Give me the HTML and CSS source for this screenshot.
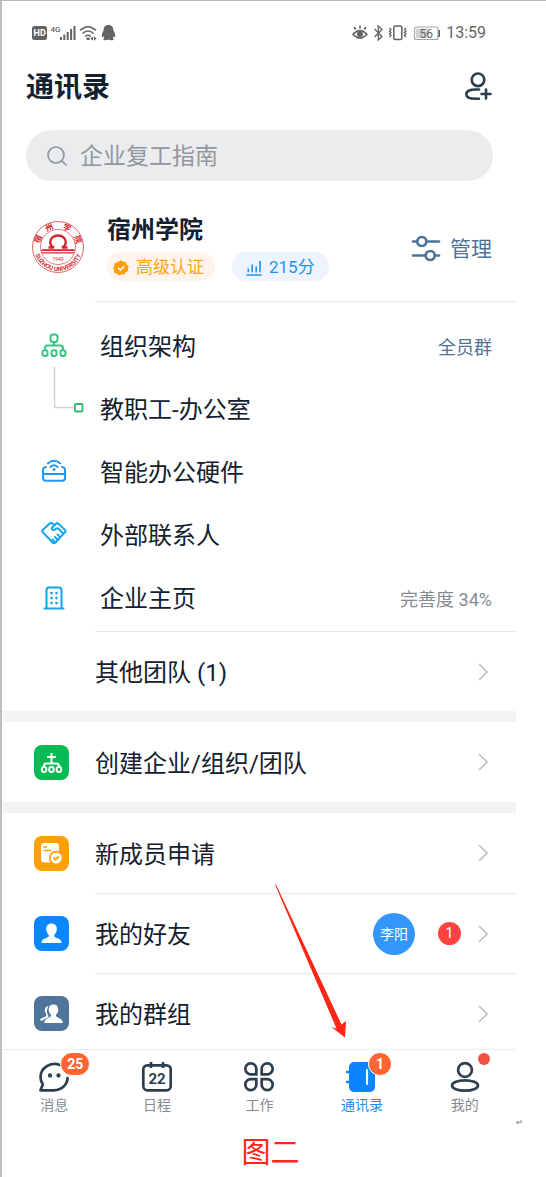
FILE: index.html
```html
<!DOCTYPE html>
<html lang="zh-CN">
<head>
<meta charset="utf-8">
<meta name="viewport" content="width=device-width, initial-scale=1">
<title>通讯录</title>
<link rel="stylesheet" href="styles.css">
</head>
<body>
<div class="sheet">
<div class="phone">
  <div class="status">
    <div class="status-group">
      <svg width="85" height="18" viewBox="0 0 85 18" fill="#636363">
        <rect x="0" y="2" width="15" height="14" rx="2.5"/>
        <text x="1.6" y="12.3" font-size="9" font-weight="700" fill="#fff">HD</text>
        <text x="18.500" y="8" font-size="8" font-weight="500">4G</text>
        <path d="M28 13h2v3h-2zM31.300 10.500h2V16h-2zM34.700 8h2v8h-2zM38.100 5h2v11h-2zM41.500 2h2v14h-2z"/>
        <path d="M48 6.500q8-7.500 16 0M50.500 9.500q5.500-5 11 0M53.200 12.500q2.800-2.500 5.600 0" fill="none" stroke="#636363" stroke-width="1.500"/>
        <path d="M54.500 13.500h3v2.500h-3zM58.500 14.500l2.500-2.300v4.500zM64.500 14.500l-2.500-2.300v4.500z"/>
        <path d="M76.500 1c-3.400 0-5 2.400-4.900 5.600-1.200 2-2.100 4.100-1.700 6.300.2.500.7.300 1.400-.7.200.8.600 1.500 1.100 2-1.700.7-1.200 2 .4 2 1.600.1 2.900-.2 3.700-.7.900.5 2.100.8 3.700.7 1.700 0 2.200-1.300.5-2 .5-.5.900-1.200 1.100-2 .7 1 1.200 1.200 1.400.7.300-2.200-.5-4.300-1.800-6.300C81.500 3.400 79.900 1 76.500 1z"/>
      </svg>
    </div>
    <div class="status-group">
      <svg width="88" height="18" viewBox="1 0 88 18" fill="none" stroke="#636363" stroke-width="1.500">
        <path d="M2 10.200q7-7.500 14 0-7 7.800-14 0zM9 4.500V1.500M5 5.500L3 3M13 5.500L15 3"/>
        <circle cx="9" cy="10" r="2.300" fill="#636363"/>
        <path d="M23.500 5l7.500 7.500-3.700 3.500V2L31 5.500 23.500 13" stroke-width="1.300"/>
        <rect x="42.800" y="2" width="8" height="13.500" rx="1.500"/>
        <path d="M38.500 4l1.500 1.500L38.500 7l1.500 1.500L38.500 10l1.500 1.500L38.500 13M55 4L53.500 5.500 55 7 53.500 8.500 55 10 53.500 11.500 55 13" stroke-width="1.300"/>
        <rect x="63.500" y="3" width="23.500" height="12.500" rx="2" stroke="#a5a5a5" stroke-width="1.200"/>
        <path d="M65 4.500h12.500v9.500H65z" fill="#d2d2d2" stroke="none"/>
        <path d="M88.200 6v7" stroke-width="1.600"/>
        <text x="68.500" y="13.500" font-size="12" fill="#666" stroke="none">56</text>
      </svg>
      <time class="clock">13:59</time>
    </div>
  </div>

  <header class="header">
    <h1 class="title">通讯录</h1>
    <button class="icon-button" type="button" aria-label="添加联系人">
      <svg width="28" height="30" viewBox="0 0 28 30" fill="none" stroke="#2d3e4f" stroke-width="2.600" stroke-linecap="round">
        <circle cx="14" cy="8.800" r="6.300"/>
        <path d="M15 18.500H11.500C5.500 18.500 2.300 20.300 2.300 23.200s3.200 4.600 9.200 4.600H15M17.500 23h9M22 18.500v9"/>
      </svg>
    </button>
  </header>

  <label class="search">
    <svg width="20" height="20" viewBox="0 0 20 20" fill="none" stroke="#92979e" stroke-width="1.700" stroke-linecap="round">
      <circle cx="9" cy="9" r="8"/><path d="M14.800 14.800l4.200 4.200"/>
    </svg>
    <input class="search-input" type="search" placeholder="企业复工指南" aria-label="搜索">
  </label>

  <section class="org">
    <svg class="org-logo" width="54" height="54" viewBox="0 0 54 54" fill="none" stroke="#d0262c" role="img" aria-label="宿州学院校徽">
      <defs>
        <path id="arc-top" d="M8.500 27a18.500 18.500 0 0 1 37 0"/>
        <path id="arc-bottom" d="M3 27a24 24 0 0 0 48 0"/>
      </defs>
      <circle cx="27" cy="27" r="25.500" stroke-width=".7"/>
      <circle cx="27" cy="27" r="17.500" stroke-width=".6"/>
      <path d="M17.500 27.500h5.500c-2.500-1.300-3.800-3.200-3.800-5.300 0-4 3.500-6.700 7.800-6.700s7.800 2.700 7.800 6.700c0 2.100-1.300 4-3.800 5.300h5.500" stroke-width="2.300"/>
      <g fill="#d0262c" stroke="none">
        <text class="seal-name"><textPath href="#arc-top" startOffset="3">宿</textPath></text>
        <text class="seal-name"><textPath href="#arc-top" startOffset="17">州</textPath></text>
        <text class="seal-name"><textPath href="#arc-top" startOffset="33">学</textPath></text>
        <text class="seal-name"><textPath href="#arc-top" startOffset="47">院</textPath></text>
        <text class="seal-latin"><textPath href="#arc-bottom" startOffset="50%" text-anchor="middle">SUZHOU UNIVERSITY</textPath></text>
        <text x="27" y="40.500" class="seal-year">1949</text>
        <path d="M10.500 29.300h33v1.600h-33zM11 32.300h32v1.100H11z"/>
      </g>
    </svg>
    <div class="org-info">
      <h2 class="org-name">宿州学院</h2>
      <div class="tags">
        <span class="tag tag-gold">
          <svg width="16" height="16" viewBox="0 0 16 16">
            <path fill="#ff9d0a" d="M8 .3l2.200 1.500 2.700.1.800 2.500 2 1.700L15 8.500l.2 2.600-2.400 1.200-1.500 2.200-2.600-.3L6.200 15.500l-2-1.700-2.600-.6-.5-2.600L.2 8.200l1.200-2.300.2-2.700 2.500-.8z"/>
            <path d="M5 7.800l2.400 2.300 3.800-3.900" fill="none" stroke="#fff" stroke-width="1.500"/>
          </svg>高级认证</span>
        <span class="tag tag-blue">
          <svg width="16" height="16" viewBox="0 0 16 16" fill="none" stroke="#1d93ee" stroke-width="1.600" stroke-linecap="round">
            <path d="M1 15h14M2.300 9v2.800M6.200 5v6.800M10.200 7v4.800M14 1.500v10.300"/>
          </svg>215分</span>
      </div>
    </div>
    <button class="manage" type="button">
      <svg width="30" height="28" viewBox="0 0 30 28" fill="none" stroke="#4f7297" stroke-width="2.700" stroke-linecap="round">
        <path d="M2 7.500h4M16 7.500h12M2 21.500h12M24 21.500h4"/>
        <circle cx="10.800" cy="7.500" r="4.500"/><circle cx="19.200" cy="21.500" r="4.500"/>
      </svg><span class="manage-text">管理</span></button>
  </section>

  <ul class="list org-list">
    <li><a class="row" href="#structure">
      <span class="row-icon"><svg width="26" height="26" viewBox="0 0 26 26" fill="none" stroke="#34c784" stroke-width="2">
        <rect x="9.500" y="1.500" width="7" height="7.500" rx="2.500"/>
        <path d="M13 9v4M4 17V15c0-1.500.8-2.500 2.500-2.500h13c1.700 0 2.500 1 2.500 2.500v2"/>
        <rect x="1.500" y="17.300" width="5" height="5.700" rx="2"/><rect x="10.500" y="17.300" width="5" height="5.700" rx="2"/><rect x="19.500" y="17.300" width="5" height="5.700" rx="2"/>
      </svg></span>
      <span class="row-label">组织架构</span><span class="row-link">全员群</span></a></li>
    <li><a class="row" href="#office">
      <span class="row-icon branch-icon"><svg class="branch" width="62" height="62" viewBox="0 0 62 62" fill="none">
        <path d="M31.500-11V29.500H51" stroke="#d4d4d4" stroke-width="1.500"/>
        <rect x="52" y="26" width="7.500" height="7.500" rx="1" stroke="#2eb872" stroke-width="1.800"/>
      </svg></span>
      <span class="row-label">教职工-办公室</span></a></li>
    <li><a class="row" href="#hardware">
      <span class="row-icon"><svg width="26" height="26" viewBox="0 0 26 26" fill="none" stroke="#2196f3" stroke-width="2" stroke-linecap="round">
        <path d="M5 8C3 8.200 2 9.200 2 11v8c0 1.800 1 2.800 2.800 2.800h16.400c1.800 0 2.800-1 2.800-2.800v-8c0-1.800-1-2.800-3-3M2 15h22"/>
        <path d="M6.800 4.500q6.200-5.500 12.400 0M9.500 8q3.500-3.500 7 0" stroke-width="1.800"/><circle cx="13" cy="10.500" r="1" fill="#2196f3" stroke-width="1"/>
      </svg></span>
      <span class="row-label">智能办公硬件</span></a></li>
    <li><a class="row" href="#external">
      <span class="row-icon"><svg width="26" height="26" viewBox="0 0 26 26" fill="none" stroke="#14a4ea" stroke-width="2" stroke-linecap="round" stroke-linejoin="round">
        <path d="M13 3L11 1.300q-1-.8-2 0L1.700 8.100q-1 1 0 2L11.500 20.500q1.500 1.500 3 0l9.600-10.400q.9-1 0-2L17.500 1.700q-1.200-1.200-2.500 0l-3.700 3.600q-1 2 .7 2.700 1.500.5 3-1.300 1.300-1 3 .5l4.500 4.700"/>
        <path d="M19 15l-2.500-2.500M16.500 17.500L14 15M13.500 19.500l-2-2"/>
      </svg></span>
      <span class="row-label">外部联系人</span></a></li>
    <li><a class="row" href="#home">
      <span class="row-icon"><svg width="26" height="26" viewBox="0 0 26 26" fill="none" stroke="#14a4ea" stroke-width="2" stroke-linecap="round">
        <path d="M3.500 23.500h19M5.500 23V5c0-1.700.8-2.500 2.500-2.500h10c1.700 0 2.500.8 2.500 2.500v18"/>
        <path d="M10.500 8v.1M15.500 8v.1M10.500 13v.1M15.500 13v.1M10.500 18v.1M15.500 18v.1" stroke-width="2.700"/>
      </svg></span>
      <span class="row-label">企业主页</span><span class="row-meta">完善度 34%</span></a></li>
  </ul>

  <ul class="list">
    <li><a class="row row-wide" href="#teams">
      <span class="tile-space"></span><span class="row-label">其他团队 (1)</span>
      <svg class="chevron" viewBox="0 0 10 18"><path d="M1 1l8 8-8 8"/></svg></a></li>
  </ul>
  <ul class="list group">
    <li><a class="row row-wide" href="#create">
      <svg class="tile green" viewBox="0 0 35 35" fill="none" stroke="#fff" stroke-width="1.900">
        <path d="M17.500 8v10M13 12h9M10 22v-1c0-1.700.8-2.500 2.500-2.500h10c1.700 0 2.500.8 2.500 2.500v1"/>
        <rect x="7.800" y="22" width="4.500" height="5" rx="2"/><rect x="15.200" y="22" width="4.500" height="5" rx="2"/><rect x="22.700" y="22" width="4.500" height="5" rx="2"/>
      </svg><span class="row-label">创建企业/组织/团队</span>
      <svg class="chevron" viewBox="0 0 10 18"><path d="M1 1l8 8-8 8"/></svg></a></li>
  </ul>
  <ul class="list group lined">
    <li><a class="row row-wide" href="#requests">
      <svg class="tile orange" viewBox="0 0 35 35">
        <rect x="7" y="7" width="18" height="19.500" rx="3" fill="#fff"/>
        <path d="M9.500 11h3.500M9.500 14.500h8" stroke="#ff9f0a" stroke-width="1.600"/>
        <circle cx="22.200" cy="22" r="6.400" fill="#fff" stroke="#ff9f0a" stroke-width="1.700"/>
        <path d="M19.500 21.700l2 2 3.500-3.500" fill="none" stroke="#ff9f0a" stroke-width="1.700"/>
      </svg><span class="row-label">新成员申请</span>
      <svg class="chevron" viewBox="0 0 10 18"><path d="M1 1l8 8-8 8"/></svg></a></li>
    <li><a class="row row-wide" href="#friends">
      <svg class="tile blue" viewBox="0 0 35 35" fill="#fff">
        <path d="M17.500 7.500c-3.600 0-5.500 2.500-5.300 5.800.1 2.600 1.300 4.300 2.600 5.700.3 1.500-.4 2.200-1.900 2.800-3 1-5.400 2-5.400 5.200h20c0-3.200-2.400-4.200-5.400-5.200-1.500-.6-2.200-1.300-1.900-2.800 1.300-1.400 2.500-3.100 2.600-5.700.2-3.300-1.700-5.800-5.300-5.800z"/>
      </svg><span class="row-label">我的好友</span>
      <span class="avatar">李阳</span><span class="count">1</span>
      <svg class="chevron" viewBox="0 0 10 18"><path d="M1 1l8 8-8 8"/></svg></a></li>
    <li><a class="row row-wide" href="#groups">
      <svg class="tile slate" viewBox="0 0 35 35" fill="#fff">
        <path d="M14.500 10.200c-3.300 0-4 3-3.500 5.300.3 1.500 1.300 2.500 1.500 3.500.2 2.700-6.500 2.300-6.500 5.500h3c1-1.500 3-2 5-3 .8-.5.700-1.500.3-2-1.700-2.500-2-6 .2-9.300z"/>
        <path d="M19.500 8.500c-3.200 0-5 2.300-4.800 5.200.1 2.300 1.200 3.900 2.300 5 .3 1.500-.4 2.200-1.700 2.700-2.800 1-5 2.500-5 5.600h18.500c0-3.100-2.300-4.600-5-5.600-1.400-.5-2-1.200-1.800-2.700 1.200-1.100 2.200-2.700 2.300-5 .2-2.900-1.600-5.200-4.800-5.200z"/>
      </svg><span class="row-label">我的群组</span>
      <svg class="chevron" viewBox="0 0 10 18"><path d="M1 1l8 8-8 8"/></svg></a></li>
  </ul>

  <nav class="tabs">
    <a class="tab" href="#messages"><span class="tab-icon">
      <svg width="32" height="32" viewBox="0 0 32 32" fill="none" stroke="#2d3e4f" stroke-width="2.700" stroke-linecap="round" stroke-linejoin="round">
        <path d="M22 4C12 .5 2.500 7 2.500 16c0 3 1 5.500 2.300 7.500L2.500 29.300h13.300c8 0 13.700-5.800 13.700-12.300"/>
        <circle cx="12" cy="14.500" r=".8" fill="#2d3e4f"/><circle cx="20.500" cy="14.500" r=".8" fill="#2d3e4f"/>
      </svg><span class="badge">25</span></span>消息</a>
    <a class="tab" href="#calendar"><span class="tab-icon">
      <svg width="32" height="32" viewBox="0 0 32 32" fill="none" stroke="#2d3e4f" stroke-width="2.700">
        <rect x="2.300" y="4.300" width="27.400" height="25" rx="4"/><path d="M10 1v6M22 1v6" />
        <text x="16" y="22.500" class="cal-day">22</text>
      </svg></span>日程</a>
    <a class="tab" href="#work"><span class="tab-icon">
      <svg width="32" height="32" viewBox="0 0 32 32" fill="none" stroke="#2d3e4f" stroke-width="2.700">
        <path d="M13.300 13.300H8.300a5.500 5.500 0 1 1 5-5.500zM18.700 13.300h5a5.500 5.500 0 1 0-5-5.500zM13.300 18.200H8.300a5.500 5.500 0 1 0 5 5.500zM18.700 18.200h5a5.500 5.500 0 1 1-5 5.500z"/>
      </svg></span>工作</a>
    <a class="tab tab-active" href="#contacts" aria-current="page"><span class="tab-icon">
      <svg width="32" height="32" viewBox="0 0 32 32">
        <rect x="3" y="1" width="26" height="30" rx="5" fill="#0a85ff"/>
        <path d="M0 11h5M0 21h5" stroke="#0a85ff" stroke-width="2.500"/><path d="M21 9v14" stroke="#fff" stroke-width="2.200" stroke-linecap="round"/>
      </svg><span class="badge">1</span></span>通讯录</a>
    <a class="tab" href="#me"><span class="tab-icon">
      <svg width="32" height="32" viewBox="0 0 32 32" fill="none" stroke="#2d3e4f" stroke-width="2.700">
        <circle cx="16" cy="9" r="6.900"/><ellipse cx="16" cy="24.500" rx="13" ry="5.200"/>
      </svg><span class="dot"></span></span>我的</a>
  </nav>

  <svg class="pointer" width="74" height="156" viewBox="0 0 74 156"><path fill="#ff2516" d="M0 .500L61.500 144.500 56.500 143 70 153.500 71 137 66.500 140.500 1 .500z"/></svg>
</div>
<div class="return">↵</div>
<p class="caption">图二</p>
</div>
</body>
</html>
```
FILE: styles.css
```css
* { box-sizing: border-box; }

body {
  margin: 0;
  background: #fff;
  color: #14202e;
  font-family: Roboto, "Noto Sans CJK SC", sans-serif;
}

.sheet {
  min-height: 100vh;
  border-top: 1px solid #b8b8b8;
  border-left: 2px solid #bebebe;
  padding-left: 1px;
}

.phone {
  position: relative;
  margin-right: 30px;
}

a { color: inherit; text-decoration: none; }

button {
  border: 0;
  padding: 0;
  background: none;
  font: inherit;
  color: inherit;
}

svg { display: block; flex: none; }

.status {
  display: flex;
  justify-content: space-between;
  align-items: center;
  height: 63px;
  padding: 0 30px 0 29px;
}

.status-group { display: flex; align-items: center; gap: 6px; }

.clock { font-size: 16px; line-height: 18px; color: #666; }

.header {
  display: flex;
  justify-content: space-between;
  align-items: center;
  height: 44px;
  padding: 0 24px 0 23px;
}

.title {
  margin: 0;
  padding-top: 3px;
  font-size: 28px;
  line-height: 41px;
  font-weight: 700;
}

.search {
  display: flex;
  align-items: center;
  gap: 13px;
  height: 51px;
  margin: 22px 23px 0;
  padding: 0 21px;
  border-radius: 26px;
  background: #ebecee;
}

.search-input {
  flex: 1;
  min-width: 0;
  border: 0;
  padding: 3px 0 0;
  outline: 0;
  background: none;
  font: inherit;
  font-size: 23px;
  line-height: 34px;
}

.search-input::placeholder { color: #92979e; }

.org {
  display: flex;
  align-items: flex-start;
  height: 120px;
  padding: 32px 24px 0 28px;
}

.org-logo { margin-top: 7px; }
.seal-name { font: 700 8px "Noto Sans CJK SC", sans-serif; }
.seal-latin { font: 700 6px Roboto, sans-serif; }
.seal-year { font: 5px Roboto, sans-serif; text-anchor: middle; }

.org-info { flex: 1; padding-left: 22px; }

.org-name { margin: 0; font-size: 24px; line-height: 34px; font-weight: 700; }

.tags { display: flex; gap: 17px; margin-top: 5px; }

.tag {
  display: flex;
  align-items: center;
  gap: 7px;
  height: 29px;
  padding: 0 11px 0 6px;
  border-radius: 15px;
  font-size: 17px;
  line-height: 27px;
}

.tag-gold { background: #fff4ec; color: #fba51b; padding-top: 2px; }
.tag-blue { background: #edf4ff; color: #1d93ee; padding: 2px 14px 0; }

.manage {
  display: flex;
  align-items: center;
  gap: 9px;
  margin-top: 18px;
  font-size: 21px;
  line-height: 30px;
  color: #4f7297;
}

.manage-text { padding-top: 3px; }

.list { margin: 0; padding: 0; list-style: none; }

.org-list::before,
.org-list::after,
.lined li + li::before {
  content: "";
  display: block;
  height: 1px;
  margin-left: 92px;
  background: #e9eaeb;
}

.org-list::before { margin-bottom: 12px; }
.org-list::after { margin-top: 2px; }

.row { display: flex; align-items: center; height: 63px; padding-right: 24px; }

.row-icon { display: flex; width: 97px; padding-left: 38px; }
.branch-icon { padding-left: 20px; }
.branch { overflow: visible; }

.row-label { flex: 1; padding-top: 3px; font-size: 24px; line-height: 36px; }
.row-link { font-size: 18px; color: #4f7297; }
.row-meta { font-size: 18px; color: #858b92; }

.row-wide { height: 79px; padding: 0 28px 0 31px; }
.tile-space { width: 61px; }

.group { border-top: 11px solid #f2f3f5; }
.group .row-wide { height: 80px; }
.lined li + li .row-wide { height: 79px; }

.tile { width: 35px; height: 35px; margin-right: 26px; border-radius: 8px; }
.green { background: #06ba54; }
.orange { background: #ff9f0a; }
.blue { background: #0a87ff; }
.slate { background: #50759b; }

.chevron {
  width: 10px;
  height: 18px;
  fill: none;
  stroke: #bcc0c4;
  stroke-width: 1.6;
}

.avatar {
  width: 42px;
  height: 42px;
  border-radius: 50%;
  background: #3296fa;
  color: #fff;
  font-size: 14px;
  line-height: 42px;
  text-align: center;
}

.count {
  width: 23px;
  height: 23px;
  margin: 0 17px 0 23px;
  border-radius: 50%;
  background: #fe4240;
  color: #fff;
  font-size: 14px;
  line-height: 23px;
  text-align: center;
}

.tabs {
  position: relative;
  display: flex;
  margin-top: -4px;
  padding: 11px 0 4px;
  border-top: 1px solid #ebecee;
  background: #fff;
}

.tab {
  flex: 1;
  display: flex;
  flex-direction: column;
  align-items: center;
  gap: 2px;
  font-size: 14px;
  line-height: 20px;
  color: #858b92;
}

.tab-active { color: #1d8cf0; }
.tab-icon { position: relative; }
.cal-day { font: 700 15px Roboto, sans-serif; fill: #2d3e4f; stroke: none; text-anchor: middle; }

.badge {
  position: absolute;
  top: -9px;
  left: 22px;
  min-width: 24px;
  height: 24px;
  padding: 0 6px;
  border: 1px solid #fff;
  border-radius: 12px;
  background: #ff6431;
  color: #fff;
  font-size: 14px;
  line-height: 22px;
  font-weight: 700;
  text-align: center;
}

.dot {
  position: absolute;
  top: -8px;
  left: 29px;
  width: 12px;
  height: 12px;
  border-radius: 50%;
  background: #f0533f;
}

.pointer { position: absolute; right: 167px; bottom: 79px; }

.return {
  padding-right: 23px;
  text-align: right;
  font: 8px "DejaVu Sans", sans-serif;
  line-height: 8px;
  color: #666;
}

.caption {
  margin: 4px 8px 0 0;
  color: #ff2516;
  font-size: 29px;
  line-height: 44px;
  text-align: center;
}
```
